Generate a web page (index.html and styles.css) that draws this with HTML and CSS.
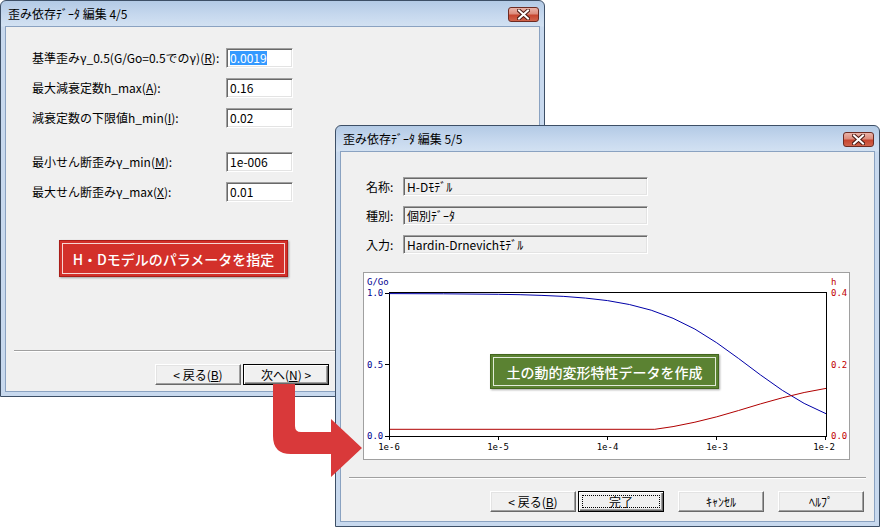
FILE: index.html
```html
<!DOCTYPE html>
<html lang="ja">
<head>
<meta charset="utf-8">
<title>歪み依存データ 編集</title>
<link rel="stylesheet" href="styles.css">
</head>
<body>
<div class="desktop">

  <section class="win win1">
    <header class="titlebar">
      <span class="title">歪み依存ﾃﾞｰﾀ 編集 4/5</span>
      <span class="close"><svg width="13" height="11" viewBox="0 0 13 11"><path d="M2 1.5 L11 9.5 M11 1.5 L2 9.5" stroke="#4a1a14" stroke-width="4" stroke-linecap="square"/><path d="M2 1.5 L11 9.5 M11 1.5 L2 9.5" stroke="#fff" stroke-width="2" stroke-linecap="square"/></svg></span>
    </header>
    <div class="client">
      <div class="form">
        <div class="group">
          <span class="lbl">基準歪みγ_0.5(G/Go=0.5でのγ)(<u>R</u>):</span>
          <span class="input"><span class="sel">0.0019</span></span>
          <span class="lbl">最大減衰定数h_max(<u>A</u>):</span>
          <span class="input">0.16</span>
          <span class="lbl">減衰定数の下限値h_min(<u>I</u>):</span>
          <span class="input">0.02</span>
        </div>
        <div class="group">
          <span class="lbl">最小せん断歪みγ_min(<u>M</u>):</span>
          <span class="input">1e-006</span>
          <span class="lbl">最大せん断歪みγ_max(<u>X</u>):</span>
          <span class="input">0.01</span>
        </div>
      </div>
      <div class="callout red">H・Dモデルのパラメータを指定</div>
      <div class="footer">
        <div class="sep"></div>
        <div class="buttons">
          <span class="btn">&lt; 戻る(<u>B</u>)</span>
          <span class="btn default">次へ(<u>N</u>) &gt;</span>
          <span class="btn gap ghost"></span>
          <span class="btn gap ghost"></span>
        </div>
      </div>
    </div>
  </section>

  <section class="win win2">
    <header class="titlebar">
      <span class="title">歪み依存ﾃﾞｰﾀ 編集 5/5</span>
      <span class="close"><svg width="13" height="11" viewBox="0 0 13 11"><path d="M2 1.5 L11 9.5 M11 1.5 L2 9.5" stroke="#4a1a14" stroke-width="4" stroke-linecap="square"/><path d="M2 1.5 L11 9.5 M11 1.5 L2 9.5" stroke="#fff" stroke-width="2" stroke-linecap="square"/></svg></span>
    </header>
    <div class="client">
      <div class="info">
        <span class="lbl">名称:</span>
        <span class="field">H-Dﾓﾃﾞﾙ</span>
        <span class="lbl">種別:</span>
        <span class="field">個別ﾃﾞｰﾀ</span>
        <span class="lbl">入力:</span>
        <span class="field">Hardin-Drnevichﾓﾃﾞﾙ</span>
      </div>
      <div class="chart">
        <svg width="485" height="186" viewBox="0 0 485 186" class="plot">
          <g class="lblL">
            <text x="3" y="12">G/Go</text>
            <text x="3" y="23">1.0</text>
            <text x="3" y="95">0.5</text>
            <text x="3" y="166">0.0</text>
          </g>
          <g class="lblR">
            <text x="467" y="12">h</text>
            <text x="467" y="23">0.4</text>
            <text x="467" y="95">0.2</text>
            <text x="467" y="166">0.0</text>
          </g>
          <g class="lblX" text-anchor="middle">
            <text x="25" y="177">1e-6</text>
            <text x="134" y="177">1e-5</text>
            <text x="243.5" y="177">1e-4</text>
            <text x="353" y="177">1e-3</text>
            <text x="460" y="177">1e-2</text>
          </g>
          <g stroke="#000" stroke-width="1" shape-rendering="crispEdges" fill="none">
            <rect x="25.5" y="19.5" width="437" height="144"/>
            <path d="M21 20.5 H25 M21 91.5 H25 M21 163.5 H25 M134.5 163 V167 M243.5 163 V167 M352.5 163 V167 M25.5 163 V167 M461.5 163 V167"/>
          </g>
          <polyline class="gcurve" points="25,20.6 79.6,20.8 134.25,21.3 156.1,21.7 177.95,22.4 199.8,23.4 221.65,25.1 243.5,27.6 265.35,31.5 287.2,37.2 309.05,45.3 330.9,56.1 352.75,69.8 374.6,85.5 396.45,101.9 418.3,117.3 440.15,130.4 462,140.7"/>
          <polyline class="hcurve" points="26,156.3 290.8,156.3 309.05,153.6 330.9,149.2 352.75,143.8 374.6,137.5 396.45,130.9 418.3,124.8 440.15,119.5 462,115.4"/>
        </svg>
      </div>
      <div class="footer">
        <div class="sep"></div>
        <div class="buttons">
          <span class="btn">&lt; 戻る(<u>B</u>)</span>
          <span class="btn default focus">完了</span>
          <span class="btn gap">ｷｬﾝｾﾙ</span>
          <span class="btn gap">ﾍﾙﾌﾟ</span>
        </div>
      </div>
    </div>
  </section>

  <div class="callout green">土の動的変形特性データを作成</div>

  <svg class="arrow" width="110" height="100" viewBox="260 380 110 100">
    <path d="M273 384 H295 V426 Q295 432 301 432 H331 V419 L362 448 L331 477 V454 H291 Q273 454 273 436 Z" fill="#d9393a"/>
  </svg>

</div>
</body>
</html>
```

FILE: styles.css
```css
* { box-sizing: border-box; }

body {
  margin: 0;
  background: #fff;
  font-family: "Noto Sans CJK JP", "Noto Sans", sans-serif;
  font-size: 12px;
  color: #000;
}

.desktop {
  position: relative;
  width: 880px;
  height: 527px;
  overflow: hidden;
}

/* window frame */
.win {
  position: absolute;
  display: flex;
  flex-direction: column;
  border: 1px solid #3d4f66;
  border-radius: 6px 6px 0 0;
  padding: 0 4px 4px;
  background: linear-gradient(#b3cae5 0, #c6d8ee 14px, #d2e1f2 25px, #c8d9ee 26px, #c8d9ee 100%);
}
.win1 { left: 0; top: 0; width: 545px; height: 397px; }
.win2 { left: 335px; top: 125px; width: 545px; height: 402px; }

.titlebar {
  height: 25px;
  display: flex;
  align-items: center;
  justify-content: space-between;
  padding-left: 3px;
}
.title {
  font-size: 12px;
  line-height: 16px;
  color: #000;
}
.close {
  width: 31px;
  height: 15px;
  margin-right: 1px;
  margin-top: 1px;
  border: 1px solid #6d2b22;
  border-radius: 3px;
  display: flex;
  align-items: center;
  justify-content: center;
  background: linear-gradient(#eab3a8 0, #dc8c7c 45%, #c7452f 55%, #d0644c 100%);
}

.client {
  flex: 1;
  display: flex;
  flex-direction: column;
  background: #f0f0f0;
  border: 1px solid #8aa2c1;
}

/* page 4 form */
.form {
  margin: 21px 0 0 26px;
  display: flex;
  flex-direction: column;
  gap: 24px;
}
.group {
  display: grid;
  grid-template-columns: 194px 67px;
  grid-auto-rows: 20px;
  row-gap: 10px;
  align-items: center;
}
.lbl {
  line-height: 16px;
  white-space: nowrap;
}
.input {
  height: 20px;
  display: flex;
  align-items: center;
  padding: 0 3px;
  background: #fff;
  border: 1px solid;
  border-color: #a0a0a0 #fff #fff #a0a0a0;
  box-shadow: inset 1px 1px 0 #696969, inset -1px -1px 0 #e3e3e3;
  line-height: 14px;
}
.sel {
  background: #3399ff;
  color: #fff;
}

/* callouts */
.callout {
  width: 229px;
  height: 37px;
  display: flex;
  align-items: center;
  justify-content: center;
  color: #fff;
  font-size: 14px;
  font-weight: 500;
}
.callout.red {
  margin: 38px 0 0 53px;
  background: #d3302a;
  border: 1px solid #a91d18;
  box-shadow: inset 0 0 0 2px #d3302a, inset 0 0 0 3px #f6d6d3, 1px 1px 2px rgba(0, 0, 0, 0.35);
}
.callout.green {
  position: absolute;
  left: 490px;
  top: 354px;
  height: 35px;
  background: #5b8232;
  border: 1px solid #44661f;
  box-shadow: inset 0 0 0 2px #5b8232, inset 0 0 0 3px #e2ebd8, 1px 1px 2px rgba(0, 0, 0, 0.35);
}

/* footer */
.footer {
  margin-top: auto;
  display: flex;
  flex-direction: column;
}
.sep {
  height: 2px;
  margin: 0 8px 12px;
  border-top: 1px solid #a0a0a0;
  border-bottom: 1px solid #fff;
}
.buttons {
  display: flex;
  justify-content: flex-end;
  gap: 2px;
  padding: 0 10px 6px 0;
}
.win2 .buttons { padding-bottom: 9px; }
.btn {
  position: relative;
  width: 86px;
  height: 21px;
  display: flex;
  align-items: center;
  justify-content: center;
  line-height: 14px;
  background: #f0f0f0;
  border: 1px solid;
  border-color: #fff #696969 #696969 #fff;
  box-shadow: inset -1px -1px 0 #a0a0a0, inset 1px 1px 0 #e3e3e3;
}
.btn.gap { margin-left: 12px; }
.btn.ghost { visibility: hidden; }
.btn.default {
  border: 1px solid #000;
  box-shadow: inset 1px 1px 0 #fff, inset -1px -1px 0 #696969, inset -2px -2px 0 #a0a0a0;
}
.btn.focus::after {
  content: "";
  position: absolute;
  inset: 3px;
  border: 1px dotted #000;
}

/* page 5 info */
.info {
  margin: 25px 0 0 25px;
  display: grid;
  grid-template-columns: 37px 245px;
  grid-auto-rows: 19px;
  row-gap: 10px;
  align-items: center;
}
.field {
  height: 19px;
  display: flex;
  align-items: center;
  padding: 0 3px;
  background: #f0f0f0;
  border: 1px solid;
  border-color: #a0a0a0 #fff #fff #a0a0a0;
  box-shadow: inset 1px 1px 0 #696969, inset -1px -1px 0 #e3e3e3;
  line-height: 14px;
  white-space: nowrap;
}

.chart {
  width: 487px;
  height: 188px;
  margin: 18px 0 0 22px;
  background: #fff;
  border: 1px solid #a0a0a0;
}
.plot { display: block; }
.plot text {
  font-family: "DejaVu Sans Mono", monospace;
  font-size: 9px;
}
.lblL { fill: #000090; }
.lblR { fill: #c00000; }
.lblX { fill: #000; }
.gcurve { fill: none; stroke: #0000a8; stroke-width: 1; }
.hcurve { fill: none; stroke: #b00000; stroke-width: 1; }

.arrow {
  position: absolute;
  left: 260px;
  top: 380px;
}
```
